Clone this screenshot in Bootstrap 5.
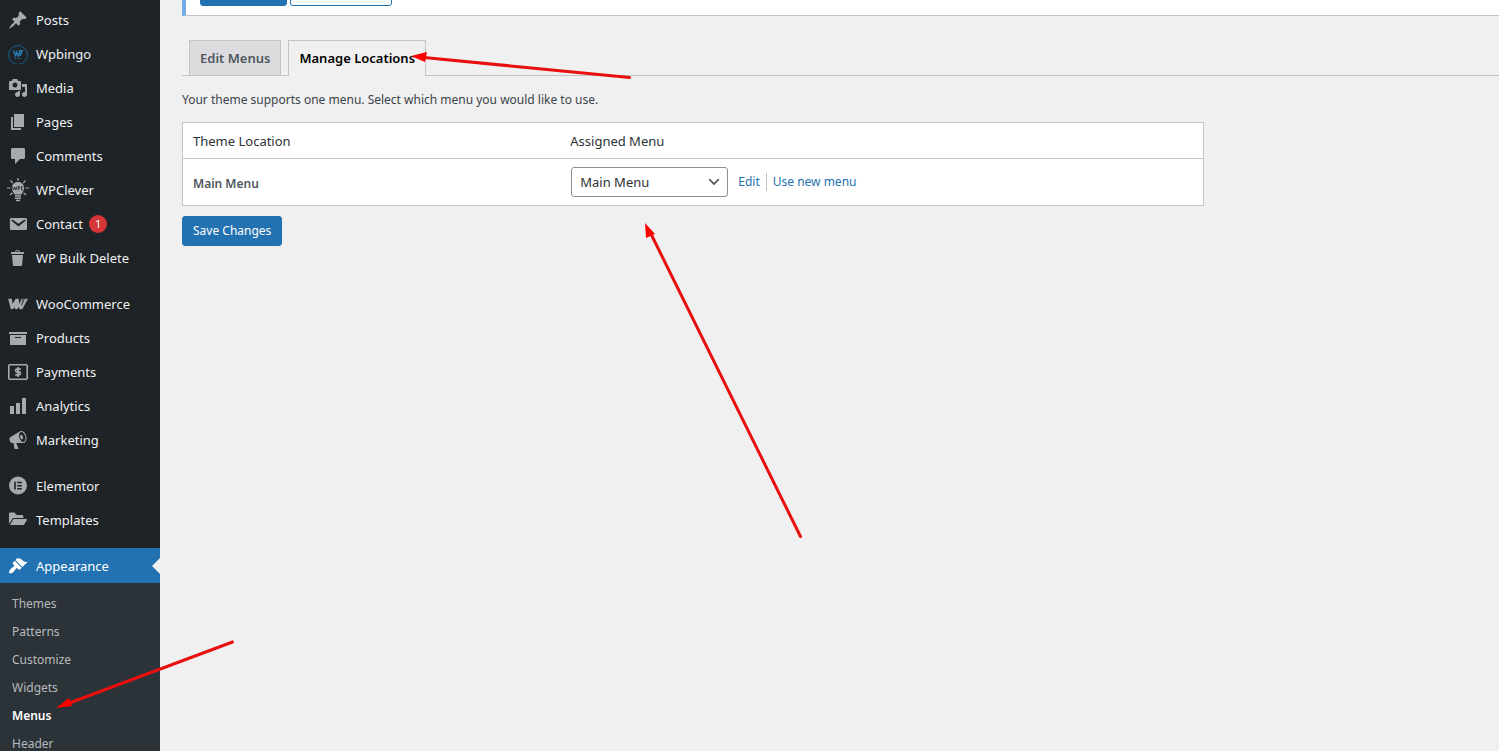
<!DOCTYPE html>
<html lang="en">
<head>
<meta charset="utf-8">
<meta name="viewport" content="width=device-width, initial-scale=1">
<title>Menus</title>
<link href="https://cdn.jsdelivr.net/npm/bootstrap@5.3.0/dist/css/bootstrap.min.css" rel="stylesheet">
<style>
  body { font-family: "Noto Sans", "Open Sans", sans-serif; font-size: 12px; line-height: 18px; color: #3c434a; background: #f0f0f1; }
  .admin-shell { height: 100vh; }
  .admin-side { width: 160px; background: #1d2327; padding-top: 3px; }
  .side-link { height: 34px; font-size: 13px; color: #f0f0f1; text-decoration: none; }
  .side-link svg { width: 20px; height: 20px; fill: #a7aaad; flex: none; }
  .side-gap { margin-top: 12px; }
  .side-block { margin-top: 11px; }
  .side-link.current { height: 35px; background: #2271b1; color: #fff; }
  .side-link.current svg { fill: #fff; }
  .side-link.current::after { content: ""; position: absolute; right: 0; top: 50%; transform: translateY(-50%); border: 8px solid transparent; border-right-color: #f0f0f1; border-left-width: 0; }
  .count-dot { width: 18px; height: 18px; font-size: 11px; background: #d63638; color: #fff; margin-left: -2px; }
  .side-sub { background: #2c3338; padding: 7px 0; }
  .side-sub a { display: block; line-height: 28px; padding: 0 12px; color: #b6babe; text-decoration: none; }
  .side-sub a.active { color: #fff; font-weight: 600; }
  .admin-main { padding-left: 22px; }
  .notice-strip { height: 16px; background: #fff; border-left: 4px solid #72aee6; border-bottom: 1px solid #c3c4c7; padding: 0 14px 9px; gap: 3px; }
  .wp-btn { height: 30px; border: 1px solid #2271b1; border-radius: 3px; padding: 0 10px; font-size: 12px; line-height: 18px; flex: none; }
  .wp-btn.solid { background: #2271b1; color: #fff; }
  .wp-btn.line { background: #f6f7f7; color: #2271b1; }
  .notice-strip .solid { width: 87px; }
  .notice-strip .line { width: 102px; }
  .save-row { margin-top: 10px; }
  .tab-row { margin-top: 24px; padding-left: 7px; gap: 7px; border-bottom: 1px solid #c3c4c7; }
  .tab-row a { height: 35px; padding: 0 10px; border: 1px solid #c3c4c7; border-bottom: 0; background: #dcdcde; color: #50575e; font-size: 13px; font-weight: 600; line-height: 35px; text-decoration: none; }
  .tab-row a.active { height: 36px; margin-bottom: -1px; background: #f0f0f1; color: #000; }
  .intro { margin: 15px 0 13px; }
  .loc-table { max-width: 1022px; background: #fff; border: 1px solid #c3c4c7; font-size: 13px; }
  .loc-table th:first-child { width: 37%; }
  .loc-table th { padding: 0 10px; font-weight: 400; color: #2c3338; }
  .loc-table thead th { height: 36px; border-bottom: 1px solid #c3c4c7; }
  .loc-table tbody th { font-size: 12px; font-weight: 600; color: #50575e; padding-top: 4px; }
  .loc-table td { height: 47px; padding: 0 11px; }
  .loc-table a { font-size: 12px; color: #2271b1; text-decoration: none; }
  .menu-pick { width: 157px; height: 30px; padding: 0 24px 0 8px; border: 1px solid #8c8f94; border-radius: 3px; font-size: 13px; color: #2c3338; appearance: none; background: #fff url("data:image/svg+xml,%3Csvg xmlns='http://www.w3.org/2000/svg' viewBox='0 0 20 20'%3E%3Cpath d='M5 6l5 5 5-5 2 1-7 7-7-7z' fill='%23555'/%3E%3C/svg%3E") no-repeat right 5px center / 16px 16px; }
  .pick-edit { margin-left: 10px; padding-right: 6px; border-right: 1px solid #c3c4c7; }
  .pick-new { padding-left: 6px; }
  .hint-arrows { left: 0; top: 0; width: 1px; height: 1px; overflow: visible; pointer-events: none; z-index: 5; }
</style>
</head>
<body>
<div class="admin-shell d-flex position-relative overflow-hidden">
  <nav class="admin-side flex-shrink-0" aria-label="Main menu">
    <a class="side-link d-flex align-items-center gap-2 ps-2" href="#"><svg viewBox="0 0 20 20"><path d="M10.44 3.02l1.82-1.82 6.36 6.35-1.83 1.82c-1.05-.68-2.48-.57-3.41.36l-.75.75c-.92.93-1.04 2.35-.35 3.41l-1.83 1.82-2.41-2.41-2.8 2.79c-.42.42-3.38 2.71-3.8 2.29s1.86-3.39 2.28-3.81l2.79-2.79L4.1 9.36l1.83-1.82c1.05.69 2.48.57 3.4-.36l.75-.75c.93-.92 1.05-2.35.36-3.41z"/></svg>Posts</a>
    <a class="side-link d-flex align-items-center gap-2 ps-2" href="#"><svg viewBox="0 0 20 20"><circle cx="10" cy="11" r="9.4" fill="none" stroke="#1f5f8c"/><path d="M5.500 6.800l2 5 1.500-3.500M8 6.800l2.500 5 1.500-4M10.500 6.800h3.700l-2 5" fill="none" stroke="#2a7ab0" stroke-width="1.500"/><path d="M6.500 14.500h7" stroke="#1f5f8c" stroke-dasharray="1.500 .5"/></svg>Wpbingo</a>
    <a class="side-link d-flex align-items-center gap-2 ps-2" href="#"><svg viewBox="0 0 20 20"><path d="M13 11V4c0-.55-.45-1-1-1h-1.670L9 1H5L3.670 3H2c-.55 0-1 .45-1 1v7c0 .55.45 1 1 1h10c.55 0 1-.45 1-1zM7 4.500c1.380 0 2.500 1.120 2.500 2.500S8.380 9.500 7 9.500 4.500 8.380 4.500 7 5.620 4.500 7 4.500zM14 6h5v10.500c0 1.380-1.120 2.500-2.500 2.500S14 17.880 14 16.500s1.120-2.500 2.500-2.500c.17 0 .34.02.5.05V9h-3V6zm-4 8.050V13h2v3.500c0 1.380-1.120 2.500-2.500 2.500S7 17.880 7 16.500 8.120 14 9.500 14c.17 0 .34.02.5.05z"/></svg>Media</a>
    <a class="side-link d-flex align-items-center gap-2 ps-2" href="#"><svg viewBox="0 0 20 20"><path d="M6 15V2h10v13H6zm-1 1h8v2H3V5h2v11z"/></svg>Pages</a>
    <a class="side-link d-flex align-items-center gap-2 ps-2" href="#"><svg viewBox="0 0 20 20"><path d="M4.500 2h11c.8 0 1.500.7 1.500 1.500v8c0 .8-.7 1.500-1.500 1.500H12l-5 5v-5H4.500C3.700 13 3 12.300 3 11.500v-8C3 2.700 3.700 2 4.500 2z"/></svg>Comments</a>
    <a class="side-link d-flex align-items-center gap-2 ps-2" href="#"><svg viewBox="0 0 20 20" overflow="visible"><path d="M10-2v3M2.500.5l2.300 2.700M17.500.5l-2.300 2.700M-1 8h3.500M17.500 8H21M2 15l2.500-2.300M18 15l-2.500-2.300" stroke="#a7aaad" stroke-width="1.200"/><path d="M10 2c3.500 0 6.200 2.600 6.200 6 0 2.600-1.600 4-2.700 6.500h-7C5.400 12 3.800 10.600 3.800 8c0-3.400 2.700-6 6.200-6z"/><path d="M4.500 6.500l1 3.500 1.200-3 1.200 3 1-3.500M10.200 10.500v-4h1.600v2h-1.600M15.500 6.800h-2v3.200h2" fill="none" stroke="#1d2327" stroke-width=".8"/><path d="M7 16h6M7 18.200h6M8 20.500h4" stroke="#a7aaad" stroke-width="1.400"/></svg>WPClever</a>
    <a class="side-link d-flex align-items-center gap-2 ps-2" href="#"><svg viewBox="0 0 20 20"><path d="M3.500 4h13.500C18.370 4 19 4.590 19 5.500v8.900c0 1-.63 1.600-1.600 1.600H3.500c-1 0-1.600-.6-1.600-1.600V5.500C1.900 4.500 2.500 4 3.500 4zm6.990 8.600l6.740-5.530c.24-.2.43-.66.13-1.070-.29-.41-.82-.42-1.170-.17l-5.700 3.860L4.800 5.830c-.35-.25-.88-.24-1.170.17-.3.41-.11.87.13 1.070z"/></svg>Contact<span class="count-dot rounded-circle d-flex align-items-center justify-content-center">1</span></a>
    <a class="side-link d-flex align-items-center gap-2 ps-2" href="#"><svg viewBox="0 0 20 20"><path d="M12 4h3c.6 0 1 .4 1 1v1H3V5c0-.6.5-1 1-1h3c.2-1.100 1.300-2 2.500-2s2.300.9 2.500 2zM8 4h3c-.2-.6-.9-1-1.500-1S8.200 3.400 8 4zM4 7h11l-.9 10.100c0 .5-.5.9-1 .9H5.900c-.5 0-.9-.4-1-.9L4 7z"/></svg>WP Bulk Delete</a>

    <a class="side-link side-gap d-flex align-items-center gap-2 ps-2" href="#"><svg viewBox="0 0 20 20"><path d="M.2 4.800h3.600l.8 5.200 3-5.200h3.200l.3 5.200 2.600-5.200h6.200l-5.200 9.600c-.4.700-.9.800-1.500.8-1.400 0-2.300-.8-2.500-2.300l-1 1.500c-.4.600-.9.800-1.600.8-.9 0-1.400-.6-1.600-1.500L7.200 12l-1.400 2.300c-.4.600-.9.900-1.600.9-.9 0-1.500-.5-1.700-1.500z"/><path d="M14.800 4.500l-1.700 6.300c-.1.900.6 1.100 1 .4l3-6.700" fill="#1d2327" opacity=".7"/></svg>WooCommerce</a>
    <a class="side-link d-flex align-items-center gap-2 ps-2" href="#"><svg viewBox="0 0 20 20"><path d="M19 4v2H1V4h18zM2 7h16v10H2V7zm11 3V9H7v1h6z"/></svg>Products</a>
    <a class="side-link d-flex align-items-center gap-2 ps-2" href="#"><svg viewBox="0 0 20 20"><rect x=".8" y="2.800" width="18.400" height="14.400" rx="1" fill="none" stroke="#a7aaad" stroke-width="1.600"/><path d="M12.800 7.200H9c-1.800 0-1.800 2.700 0 2.700h2c2 0 2 2.900 0 2.900H7.200M10 5v10" fill="none" stroke="#a7aaad" stroke-width="1.700"/></svg>Payments</a>
    <a class="side-link d-flex align-items-center gap-2 ps-2" href="#"><svg viewBox="0 0 20 20"><path d="M18 18V2h-4v16h4zm-6 0V7H8v11h4zm-6 0v-8H2v8h4z"/></svg>Analytics</a>
    <a class="side-link d-flex align-items-center gap-2 ps-2" href="#"><svg viewBox="0 0 20 20"><path d="M18.150 5.940c.46 1.620.38 3.220-.02 4.480-.42 1.280-1.260 2.180-2.300 2.480-.16.06-.26.06-.4.06-.06.02-.12.02-.18.02-.06.02-.14.02-.22.02h-6.800l2.220 5.500c.02.14-.06.26-.14.34-.08.1-.24.16-.34.16H6.950c-.1 0-.26-.06-.34-.16-.08-.08-.16-.2-.14-.34l-1-5.500H4.250l-.02-.02c-.5.06-1.080-.18-1.540-.62s-.88-1.080-1.060-1.880c-.24-.8-.2-1.560-.02-2.200.18-.62.58-1.080 1.060-1.300l.02-.02 9-5.400c.1-.06.18-.1.24-.16.06-.04.14-.08.24-.12.16-.08.28-.12.5-.18 1.040-.3 2.240.1 3.220.98s1.840 2.240 2.260 3.860zm-2.580 5.980h-.02c.4-.1.74-.34 1.040-.7.58-.7.86-1.760.86-3.040 0-.64-.1-1.300-.28-1.980-.34-1.360-1.020-2.500-1.780-3.240s-1.680-1.100-2.460-.88c-.82.22-1.400.96-1.700 2-.32 1.040-.28 2.360.06 3.720.38 1.360 1 2.500 1.800 3.240.78.74 1.620 1.100 2.480.88zm-2.540-7.080c.22-.04.42-.02.62.04.38.16.76.48 1.020 1s.42 1.200.42 1.780c0 .3-.04.56-.12.8-.18.48-.44.84-.86.94-.34.1-.8-.06-1.140-.4s-.64-.86-.78-1.500c-.18-.62-.12-1.240.02-1.720s.48-.84.82-.94z"/></svg>Marketing</a>

    <a class="side-link side-gap d-flex align-items-center gap-2 ps-2" href="#"><svg viewBox="0 0 20 20"><circle cx="10" cy="9.500" r="9"/><path d="M6.200 5.800h1.600v7.600H6.200zM9.200 5.800h4.600v1.500H9.200zM9.200 8.900h4.600v1.500H9.200zM9.200 11.900h4.600v1.500H9.200z" fill="#1d2327"/></svg>Elementor</a>
    <a class="side-link d-flex align-items-center gap-2 ps-2" href="#"><svg viewBox="0 0 20 20"><path d="M1 14V4c0-.8.6-1.400 1.400-1.400h4L8.600 5H14c.8 0 1.400.6 1.400 1.400V8H6.200c-.8 0-1.500.4-1.900 1.100z"/><path d="M2 15l3-5.300c.3-.5.7-.7 1.200-.7h12.200c.5 0 .8.5.5.9l-2.700 4.500c-.3.500-.7.700-1.200.7z"/></svg>Templates</a>

    <div class="side-block">
      <a class="side-link current position-relative d-flex align-items-center gap-2 ps-2" href="#"><svg viewBox="0 0 20 20"><path d="M14.480 11.060L7.410 3.990l1.500-1.500c.5-.56 2.300-.47 3.510.32 1.210.8 1.430 1.280 2.910 2.100 1.180.64 2.450 1.260 4.450.85zm-.71.71L6.700 4.700 4.930 6.470c-.39.39-.39 1.020 0 1.410l1.060 1.060c.39.39.39 1.030 0 1.420-.6.6-1.430 1.110-2.210 1.690-.35.26-.7.53-1.010.84C1.430 14.230.4 16.080 1.400 17.070c.99 1 2.840-.03 4.180-1.360.31-.31.58-.66.85-1.020.57-.78 1.080-1.610 1.690-2.210.39-.39 1.020-.39 1.410 0l1.060 1.060c.39.39 1.020.39 1.410 0z"/></svg>Appearance</a>
      <div class="side-sub">
        <a href="#">Themes</a>
        <a href="#">Patterns</a>
        <a href="#">Customize</a>
        <a href="#">Widgets</a>
        <a class="active" href="#" aria-current="page">Menus</a>
        <a href="#">Header</a>
      </div>
    </div>
  </nav>

  <main class="admin-main flex-grow-1">
    <div class="notice-strip d-flex align-items-end overflow-hidden">
      <button type="button" class="wp-btn solid" aria-label="Accept"></button>
      <button type="button" class="wp-btn line" aria-label="Dismiss"></button>
    </div>
    <nav class="tab-row d-flex" aria-label="Menu screens">
      <a href="#">Edit Menus</a>
      <a class="active" href="#" aria-current="page">Manage Locations</a>
    </nav>
    <p class="intro">Your theme supports one menu. Select which menu you would like to use.</p>
    <form>
      <table class="loc-table w-100">
        <thead>
          <tr><th scope="col">Theme Location</th><th scope="col">Assigned Menu</th></tr>
        </thead>
        <tbody>
          <tr>
            <th scope="row"><label for="loc-main">Main Menu</label></th>
            <td>
              <div class="d-flex align-items-center">
                <select id="loc-main" class="menu-pick"><option>Main Menu</option></select>
                <a class="pick-edit" href="#">Edit</a>
                <a class="pick-new" href="#">Use new menu</a>
              </div>
            </td>
          </tr>
        </tbody>
      </table>
      <div class="save-row"><button type="button" class="wp-btn solid">Save Changes</button></div>
    </form>
  </main>

  <!-- Red pointers laid over the page -->
  <svg class="hint-arrows position-absolute" aria-hidden="true">
    <g stroke="#e8100f" stroke-width="3" stroke-linecap="round">
      <path d="M424 57.500L629.500 77.500"/><path d="M650.500 233L800.500 536.500"/><path d="M68 703.500L232.500 642"/>
    </g>
    <g fill="#fe0000">
      <path d="M411 56L427 52 425 62z"/><path d="M645 223L655 234 646 238z"/><path d="M56 708L69 698 72 706z"/>
    </g>
  </svg>
</div>
<script src="https://cdn.jsdelivr.net/npm/bootstrap@5.3.0/dist/js/bootstrap.bundle.min.js"></script>
</body>
</html>
